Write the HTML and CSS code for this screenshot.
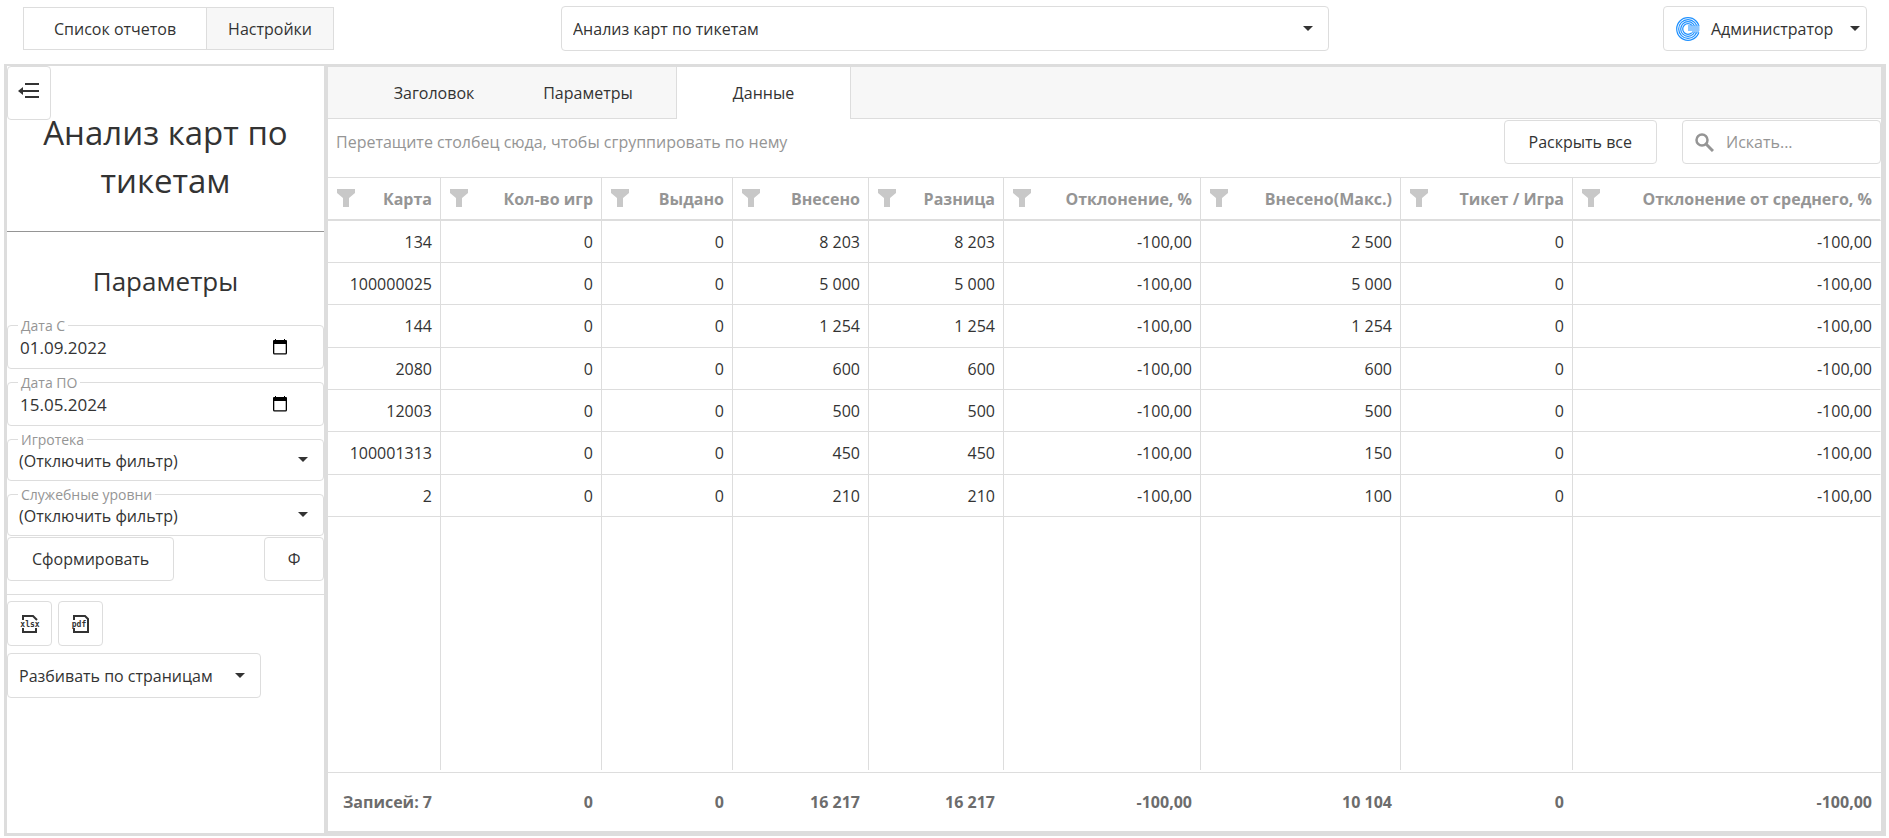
FILE: index.html
```
<!DOCTYPE html>
<html lang="ru">
<head>
  <meta charset="UTF-8">
  <title>Анализ карт по тикетам</title>
  <link rel="stylesheet" href="styles.css">
</head>
<body>
  <svg class="defs" aria-hidden="true">
    <symbol id="filter" viewBox="0 0 18 18"><path d="M0 0h18v4l-6 5v9H6V9L0 4z" fill="currentColor"/></symbol>
    <symbol id="calendar" viewBox="0 0 16 16"><path d="M3 0h1v1h8V0h1v1h1q1 0 1 1v12q0 1.500-1.500 1.500h-11Q1 15.500 1 14V2q0-1 1-1h1zM2.300 5v9.200h11.400V5z" fill="#000" fill-rule="evenodd"/></symbol>
  </svg>

  <header class="toolbar">
    <nav class="group">
      <button type="button" class="group-btn">Список отчетов</button>
      <button type="button" class="group-btn active">Настройки</button>
    </nav>
    <div class="select report-select">
      <select aria-label="Отчет"><option>Анализ карт по тикетам</option></select>
    </div>
    <button type="button" class="user">
      <svg width="24" height="24" viewBox="0 0 24 24" fill="none" stroke="#1e90ff" stroke-width="1.200">
        <circle cx="12" cy="12" r="11.300"/>
        <circle cx="12" cy="12" r="9.300"/>
        <circle cx="12" cy="12" r="7.300"/>
        <circle cx="12" cy="12" r="5.300"/>
        <path d="M12 8.500h12v7H12z" fill="#fff" stroke="none"/>
        <path d="M12 9h11.500M12 11h11.500M12 13h11.500M16 15h7"/>
      </svg>
      <span>Администратор</span>
      <i class="caret"></i>
    </button>
  </header>

  <main class="frame">
    <aside class="side">
      <button type="button" class="btn collapse" aria-label="Свернуть">
        <svg width="22" height="16" viewBox="0 0 22 16" fill="#333"><path d="M7 0h14v2H7zM4 7h17v2H4zM7 13h14v2H7zM0 8l5-4v8z"/></svg>
      </button>
      <h1>Анализ карт по тикетам</h1>
      <h2>Параметры</h2>

      <form class="params">
        <div class="field date">
          <label for="from">Дата С</label>
          <input id="from" type="text" value="01.09.2022">
          <svg width="16" height="16"><use href="#calendar"/></svg>
        </div>
        <div class="field date">
          <label for="to">Дата ПО</label>
          <input id="to" type="text" value="15.05.2024">
          <svg width="16" height="16"><use href="#calendar"/></svg>
        </div>
        <div class="field select">
          <label for="place">Игротека</label>
          <select id="place"><option>(Отключить фильтр)</option></select>
        </div>
        <div class="field select">
          <label for="levels">Служебные уровни</label>
          <select id="levels"><option>(Отключить фильтр)</option></select>
        </div>
        <div class="actions">
          <button type="button" class="btn build">Сформировать</button>
          <button type="button" class="btn phi">Ф</button>
        </div>
      </form>

      <div class="export">
        <button type="button" class="btn icon" aria-label="Экспорт в xlsx">
          <svg width="20" height="20" viewBox="0 0 20 20">
            <path d="M3 6V2h10l4 4M3 14v4h13v-4" fill="none" stroke="#333" stroke-width="2"/>
            <text x="10" y="13" text-anchor="middle" class="ext">xlsx</text>
          </svg>
        </button>
        <button type="button" class="btn icon" aria-label="Экспорт в pdf">
          <svg width="20" height="20" viewBox="0 0 20 20">
            <path d="M3 6V2h11l3 3v13H3v-4" fill="none" stroke="#333" stroke-width="2"/>
            <text x="8" y="13" text-anchor="middle" class="ext">pdf</text>
          </svg>
        </button>
      </div>
      <div class="select pages">
        <select aria-label="Страницы"><option>Разбивать по страницам</option></select>
      </div>
    </aside>

    <section class="content">
      <div class="tabs" role="tablist">
        <button type="button" class="tab" role="tab">Заголовок</button>
        <button type="button" class="tab" role="tab">Параметры</button>
        <button type="button" class="tab active" role="tab" aria-selected="true">Данные</button>
      </div>

      <div class="grid-bar">
        <span class="hint">Перетащите столбец сюда, чтобы сгруппировать по нему</span>
        <button type="button" class="btn expand">Раскрыть все</button>
        <div class="search">
          <svg width="19" height="19" viewBox="0 0 19 19" fill="none" stroke="#959595"><circle cx="7" cy="7" r="5.500" stroke-width="2.500"/><path d="M11 11l7 7" stroke-width="3"/></svg>
          <input type="text" placeholder="Искать..." aria-label="Искать">
        </div>
      </div>

      <table class="grid">
        <colgroup>
          <col class="w-card"><col class="w-games"><col class="w-out"><col class="w-in"><col class="w-diff"><col class="w-dev"><col class="w-max"><col class="w-ticket"><col>
        </colgroup>
        <thead>
          <tr>
            <th><svg class="filter"><use href="#filter"/></svg>Карта</th>
            <th><svg class="filter"><use href="#filter"/></svg>Кол-во игр</th>
            <th><svg class="filter"><use href="#filter"/></svg>Выдано</th>
            <th><svg class="filter"><use href="#filter"/></svg>Внесено</th>
            <th><svg class="filter"><use href="#filter"/></svg>Разница</th>
            <th><svg class="filter"><use href="#filter"/></svg>Отклонение, %</th>
            <th><svg class="filter"><use href="#filter"/></svg>Внесено(Макс.)</th>
            <th><svg class="filter"><use href="#filter"/></svg>Тикет / Игра</th>
            <th><svg class="filter"><use href="#filter"/></svg>Отклонение от среднего, %</th>
          </tr>
        </thead>
        <tbody>
          <tr><td>134</td><td>0</td><td>0</td><td>8 203</td><td>8 203</td><td>-100,00</td><td>2 500</td><td>0</td><td>-100,00</td></tr>
          <tr><td>100000025</td><td>0</td><td>0</td><td>5 000</td><td>5 000</td><td>-100,00</td><td>5 000</td><td>0</td><td>-100,00</td></tr>
          <tr><td>144</td><td>0</td><td>0</td><td>1 254</td><td>1 254</td><td>-100,00</td><td>1 254</td><td>0</td><td>-100,00</td></tr>
          <tr><td>2080</td><td>0</td><td>0</td><td>600</td><td>600</td><td>-100,00</td><td>600</td><td>0</td><td>-100,00</td></tr>
          <tr><td>12003</td><td>0</td><td>0</td><td>500</td><td>500</td><td>-100,00</td><td>500</td><td>0</td><td>-100,00</td></tr>
          <tr><td>100001313</td><td>0</td><td>0</td><td>450</td><td>450</td><td>-100,00</td><td>150</td><td>0</td><td>-100,00</td></tr>
          <tr><td>2</td><td>0</td><td>0</td><td>210</td><td>210</td><td>-100,00</td><td>100</td><td>0</td><td>-100,00</td></tr>
          <tr class="filler"><td></td><td></td><td></td><td></td><td></td><td></td><td></td><td></td><td></td></tr>
          <tr class="spacer"><td colspan="9"></td></tr>
        </tbody>
        <tfoot>
          <tr><td>Записей: 7</td><td>0</td><td>0</td><td>16 217</td><td>16 217</td><td>-100,00</td><td>10 104</td><td>0</td><td>-100,00</td></tr>
        </tfoot>
      </table>
    </section>
  </main>
</body>
</html>
```
FILE: styles.css
```
* {
  box-sizing: border-box;
}

body {
  margin: 0;
  height: 100vh;
  display: flex;
  flex-direction: column;
  padding-bottom: 2px;
  background: #fff;
  color: #333;
  font-family: "Open Sans", "Noto Sans", sans-serif;
  font-size: 16px;
}

button, input, select {
  font: inherit;
  color: inherit;
  background: #fff;
  border: 1px solid #ddd;
  border-radius: 4px;
  padding: 0;
  outline: none;
}

.defs {
  display: none;
}

/* top toolbar */
.toolbar {
  height: 64px;
  display: grid;
  grid-template-columns: 1fr 768px 1fr;
  align-items: start;
  padding: 6px 22px 0 23px;
}

.group {
  display: flex;
  margin-top: 1px;
}

.group-btn {
  height: 43px;
  padding: 0 30px;
  border-radius: 0;
}

.group-btn.active {
  padding: 0 21px;
  margin-left: -1px;
  background: #f7f7f7;
}

.select {
  position: relative;
}

.select select {
  width: 100%;
  height: 45px;
  padding: 0 11px;
  appearance: none;
}

.select::after,
.caret {
  border: 5px solid transparent;
  border-top-color: #333;
  border-bottom: 0;
}

.select::after {
  content: "";
  position: absolute;
  right: 16px;
  top: 50%;
  margin-top: -3px;
  pointer-events: none;
}

.user {
  justify-self: end;
  min-width: 204px;
  height: 45px;
  display: flex;
  align-items: center;
  padding: 0 6px 0 12px;
}

.user span {
  flex: 1;
  margin-left: 11px;
  text-align: left;
}

/* frame with two panels */
.frame {
  flex: 1;
  min-height: 0;
  display: flex;
  gap: 4px;
  margin: 0 3px 0 4px;
  padding: 2px 5px 3px 3px;
  background: #ddd;
}

.side {
  position: relative;
  width: 317px;
  flex: none;
  background: #fff;
}

.collapse {
  position: absolute;
  left: 0;
  top: 0;
  width: 44px;
  height: 54px;
}

h1, h2 {
  margin: 0;
  font-weight: 400;
  text-align: center;
}

h1 {
  padding: 43px 20px 26px;
  border-bottom: 1px solid #959595;
  font-size: 33px;
  line-height: 48px;
}

h2 {
  padding: 31px 0 26px;
  font-size: 26px;
  line-height: 36px;
}

.params {
  border-bottom: 1px solid #ddd;
  padding-bottom: 13px;
}

.field {
  position: relative;
  margin-bottom: 13px;
}

.field label {
  position: absolute;
  left: 11px;
  top: -9px;
  padding: 0 3px;
  background: #fff;
  color: #959595;
  font-size: 14px;
  line-height: 20px;
}

.field input,
.field select {
  display: block;
  width: 100%;
  height: 44px;
  padding: 0 12px;
}

.field input {
  font-size: 17px;
}

.field.select select {
  height: 42px;
  padding: 2px 11px 0;
}

.field.select:nth-child(4) {
  margin-bottom: 1px;
}

.date svg {
  position: absolute;
  right: 36px;
  top: 14px;
}

.actions {
  display: flex;
  justify-content: space-between;
}

.build,
.phi,
.expand {
  height: 44px;
  padding: 0 24px;
}

.phi {
  width: 60px;
  padding: 0;
}

.export {
  display: flex;
  gap: 6px;
  padding: 6px 0 7px;
}

.icon {
  width: 45px;
  height: 45px;
}

.icon svg {
  display: block;
  margin: auto;
}

.ext {
  font: bold 8px "DejaVu Sans Mono", monospace;
  fill: #333;
}

.pages {
  width: 254px;
}

/* right panel */
.content {
  flex: 1;
  min-width: 0;
  display: flex;
  flex-direction: column;
  margin: 1px 0 2px;
  background: #fff;
}

.tabs {
  display: flex;
  height: 52px;
  padding-left: 29px;
  background: #f7f7f7;
  box-shadow: inset 0 -1px #ddd;
}

.tab {
  width: 154px;
  border: 0;
  border-radius: 0;
  background: none;
}

.tab.active {
  width: 175px;
  margin-left: 11px;
  background: #fff;
  border: solid #ddd;
  border-width: 0 1px;
}

.grid-bar {
  display: flex;
  align-items: flex-start;
  padding: 1px 0 13px 8px;
}

.hint {
  flex: 1;
  color: #959595;
  line-height: 44px;
}

.search {
  display: flex;
  align-items: center;
  width: 199px;
  height: 44px;
  margin-left: 25px;
  padding-left: 12px;
  border: 1px solid #ddd;
  border-radius: 4px;
}

.search input {
  flex: 1;
  min-width: 0;
  margin-left: 12px;
  border: 0;
}

.search input::placeholder {
  color: #959595;
  opacity: 1;
}

.grid {
  flex: 1;
  width: 100%;
  table-layout: fixed;
  border-collapse: separate;
  border-spacing: 0;
}

.w-card { width: 113px; }
.w-games { width: 161px; }
.w-out { width: 131px; }
.w-in { width: 136px; }
.w-diff { width: 135px; }
.w-dev { width: 197px; }
.w-max { width: 200px; }
.w-ticket { width: 172px; }

.grid th,
.grid td {
  height: 42px;
  padding: 0 8px;
  text-align: right;
  white-space: nowrap;
  border-right: 1px solid #ddd;
  border-bottom: 1px solid #ddd;
}

.grid th {
  height: 44px;
  padding: 1px 8px 0 9px;
  color: #959595;
  font-weight: 700;
  border-top: 1px solid #ddd;
  border-bottom-width: 2px;
}

.grid tbody tr:nth-child(3n) td {
  height: 43px;
}

.grid th:last-child,
.grid td:last-child {
  border-right-color: transparent;
}

.filter {
  float: left;
  width: 18px;
  height: 18px;
  margin-top: 1px;
  color: #c8c8c8;
}

/* takes the height the rows leave free */
.grid .filler,
.grid .filler td {
  height: 100%;
  border-bottom: 0;
}

.grid tbody tr.spacer td {
  height: 3px;
  padding: 0;
  border-right: 0;
}

.grid tfoot td {
  height: 58px;
  border: 0;
  border-right: 1px solid transparent;
  color: #6c6c6c;
  font-weight: 700;
}
```
